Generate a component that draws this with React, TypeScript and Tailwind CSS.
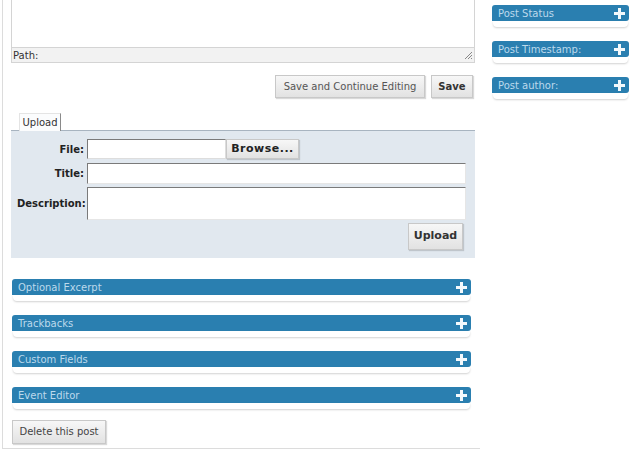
import React from "react";

const font = "font-['DejaVu_Sans',sans-serif]";

function Plus() {
  return (
    <svg width="11" height="11" viewBox="0 0 11 11" className="shrink-0">
      <rect x="4" y="0" width="3" height="11" fill="#f4f9fc" />
      <rect x="0" y="4" width="11" height="3" fill="#f4f9fc" />
    </svg>
  );
}

function Box({ title, className = "" }: { title: string; className?: string }) {
  return (
    <div className={className}>
      <div className="h-[16px] bg-[#2a7fb0] rounded-t-[3px] rounded-br-[3px] flex items-end justify-between pl-[6px] pr-[4px] pb-[1px]">
        <span className="text-[10px] leading-[12px] text-[#bcd9ec]">{title}</span>
        <span className="self-center pt-[1px]">
          <Plus />
        </span>
      </div>
      <div className="h-[6px] mx-[1px] rounded-b-[4px] bg-white shadow-[0_1px_2px_rgba(0,0,0,0.18)]" />
    </div>
  );
}

function Btn({ children, className = "" }: { children: React.ReactNode; className?: string }) {
  return (
    <button
      type="button"
      className={`bg-gradient-to-b from-[#f7f7f7] to-[#e2e2e2] border border-[#c8c8c8] shadow-[1px_1px_1px_rgba(0,0,0,0.15)] text-[10px] ${className}`}
    >
      {children}
    </button>
  );
}

export default function App() {
  return (
    <div className={`w-[640px] h-[451px] bg-white flex overflow-hidden ${font}`}>
      {/* main column */}
      <div className="w-[478px] h-[449px] ml-[2px] border-l border-b border-[#dcdcdc] pl-[8px] pr-[5px] flex flex-col">
        <div className="h-[47px] border-l border-r border-[#d4d4d4] bg-white" />
        <div className="h-[16px] border border-[#d4d4d4] bg-[#f2f2f2] flex items-center justify-between pl-[1px] pr-[1px]">
          <span className="text-[10px] text-[#333]">Path:</span>
          <svg width="9" height="9" viewBox="0 0 9 9">
            <path d="M8 1 L1 8 M8 4 L4 8 M8 7 L7 8" stroke="#888" strokeWidth="1" />
          </svg>
        </div>

        <div className="flex justify-end gap-[6px] mt-[12px] pr-[2px]">
          <Btn className="h-[23px] w-[150px] text-[#555]">Save and Continue Editing</Btn>
          <Btn className="h-[23px] w-[42px] font-bold text-[#333]">Save</Btn>
        </div>

        {/* upload tabs */}
        <div className="mt-[15px] relative h-[17px]">
          <div className="absolute left-[8px] top-0 h-[18px] w-[42px] bg-[#fbfcfd] border-t border-l border-r border-l-[#e4e4e4] border-t-[#e4e4e4] border-r-[#8a8a8a] text-[10px] text-[#333] flex items-center justify-center z-10">
            Upload
          </div>
        </div>
        <div className="h-[128px] border-t border-[#a8b4c0] bg-[#e1e8ef] pt-[8px] pl-[6px] pr-[9px]">
          <div className="flex items-center h-[20px]">
            <span className="w-[70px] text-right pr-[3px] text-[10px] font-bold text-[#222]">File:</span>
            <div className="w-[139px] h-[20px] bg-white border border-t-[#7a7a7a] border-l-[#7a7a7a] border-r-[#ddd] border-b-[#ddd]" />
            <Btn className="h-[20px] w-[73px] font-bold text-[11px] text-[#222] tracking-[0.5px]">Browse...</Btn>
          </div>
          <div className="flex items-center h-[21px] mt-[4px]">
            <span className="w-[70px] text-right pr-[3px] text-[10px] font-bold text-[#222]">Title:</span>
            <div className="flex-1 h-[21px] bg-white border border-t-[#7a7a7a] border-l-[#7a7a7a] border-r-[#e6e6e6] border-b-[#e6e6e6]" />
          </div>
          <div className="flex items-center h-[33px] mt-[3px]">
            <span className="w-[70px] text-right pr-[3px] text-[10px] font-bold text-[#222]">Description:</span>
            <div className="flex-1 h-[33px] bg-white border border-t-[#7a7a7a] border-l-[#7a7a7a] border-r-[#e6e6e6] border-b-[#e6e6e6]" />
          </div>
          <div className="flex justify-end mt-[3px] pr-[3px]">
            <Btn className="h-[27px] w-[55px] font-bold text-[11px] text-[#333]">Upload</Btn>
          </div>
        </div>

        <div className="flex flex-col gap-[14px] mt-[21px] pl-[1px] pr-[4px]">
          <Box title="Optional Excerpt" />
          <Box title="Trackbacks" />
          <Box title="Custom Fields" />
          <Box title="Event Editor" />
        </div>

        <div className="mt-[9px] pl-[1px]">
          <Btn className="h-[24px] w-[94px] text-[#444]">Delete this post</Btn>
        </div>
      </div>

      {/* sidebar */}
      <div className="flex-1 pt-[5px] pl-[12px] pr-[11px] flex flex-col gap-[14px]">
        <Box title="Post Status" />
        <Box title="Post Timestamp:" />
        <Box title="Post author:" />
      </div>
    </div>
  );
}
